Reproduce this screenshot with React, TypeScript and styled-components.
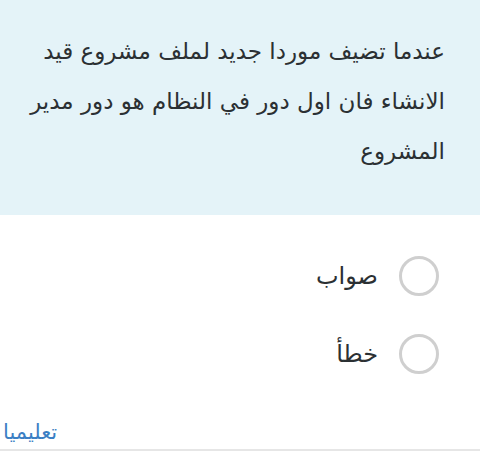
import React from "react";
import styled, { createGlobalStyle } from "styled-components";

const Global = createGlobalStyle`
  html, body { margin: 0; padding: 0; background: #ffffff; }
  body { width: 480px; height: 451px; overflow: hidden; }
`;

const Page = styled.div`
  width: 480px;
  height: 451px;
  box-sizing: border-box;
  display: flex;
  flex-direction: column;
  background: #ffffff;
  border-bottom: 2px solid #e6e6e6;
  position: relative;
`;

const Question = styled.div`
  height: 215px;
  box-sizing: border-box;
  background: #e4f3f8;
  direction: rtl;
  padding: 26px 35px 0 20px;
  font-family: "DejaVu Sans", "Noto Sans", sans-serif;
  font-size: 23px;
  line-height: 50px;
  color: #2b3033;
  white-space: nowrap;
`;

const Line = styled.div``;

const Options = styled.div`
  direction: rtl;
  display: flex;
  flex-direction: column;
  gap: 38px;
  padding: 41px 41px 0 0;
`;

const Option = styled.label`
  display: flex;
  align-items: center;
  gap: 21px;
  font-family: "DejaVu Sans", "Noto Sans", sans-serif;
  font-size: 24px;
  color: #2b3033;
`;

const Radio = styled.span`
  width: 34px;
  height: 34px;
  border-radius: 50%;
  border: 3px solid #cfcfcf;
  flex: none;
`;

const Brand = styled.div`
  position: absolute;
  left: 3px;
  bottom: 5px;
  font-family: "DejaVu Sans", sans-serif;
  font-size: 21px;
  color: #3b7fc4;
  direction: rtl;
`;

export default function App() {
  return (
    <>
      <Global />
      <Page>
        <Question>
          <Line>عندما تضيف موردا جديد لملف مشروع قيد</Line>
          <Line>الانشاء فان اول دور في النظام هو دور مدير</Line>
          <Line>المشروع</Line>
        </Question>
        <Options>
          <Option>
            <Radio />
            صواب
          </Option>
          <Option>
            <Radio />
            خطأ
          </Option>
        </Options>
        <Brand>تعليميا</Brand>
      </Page>
    </>
  );
}
